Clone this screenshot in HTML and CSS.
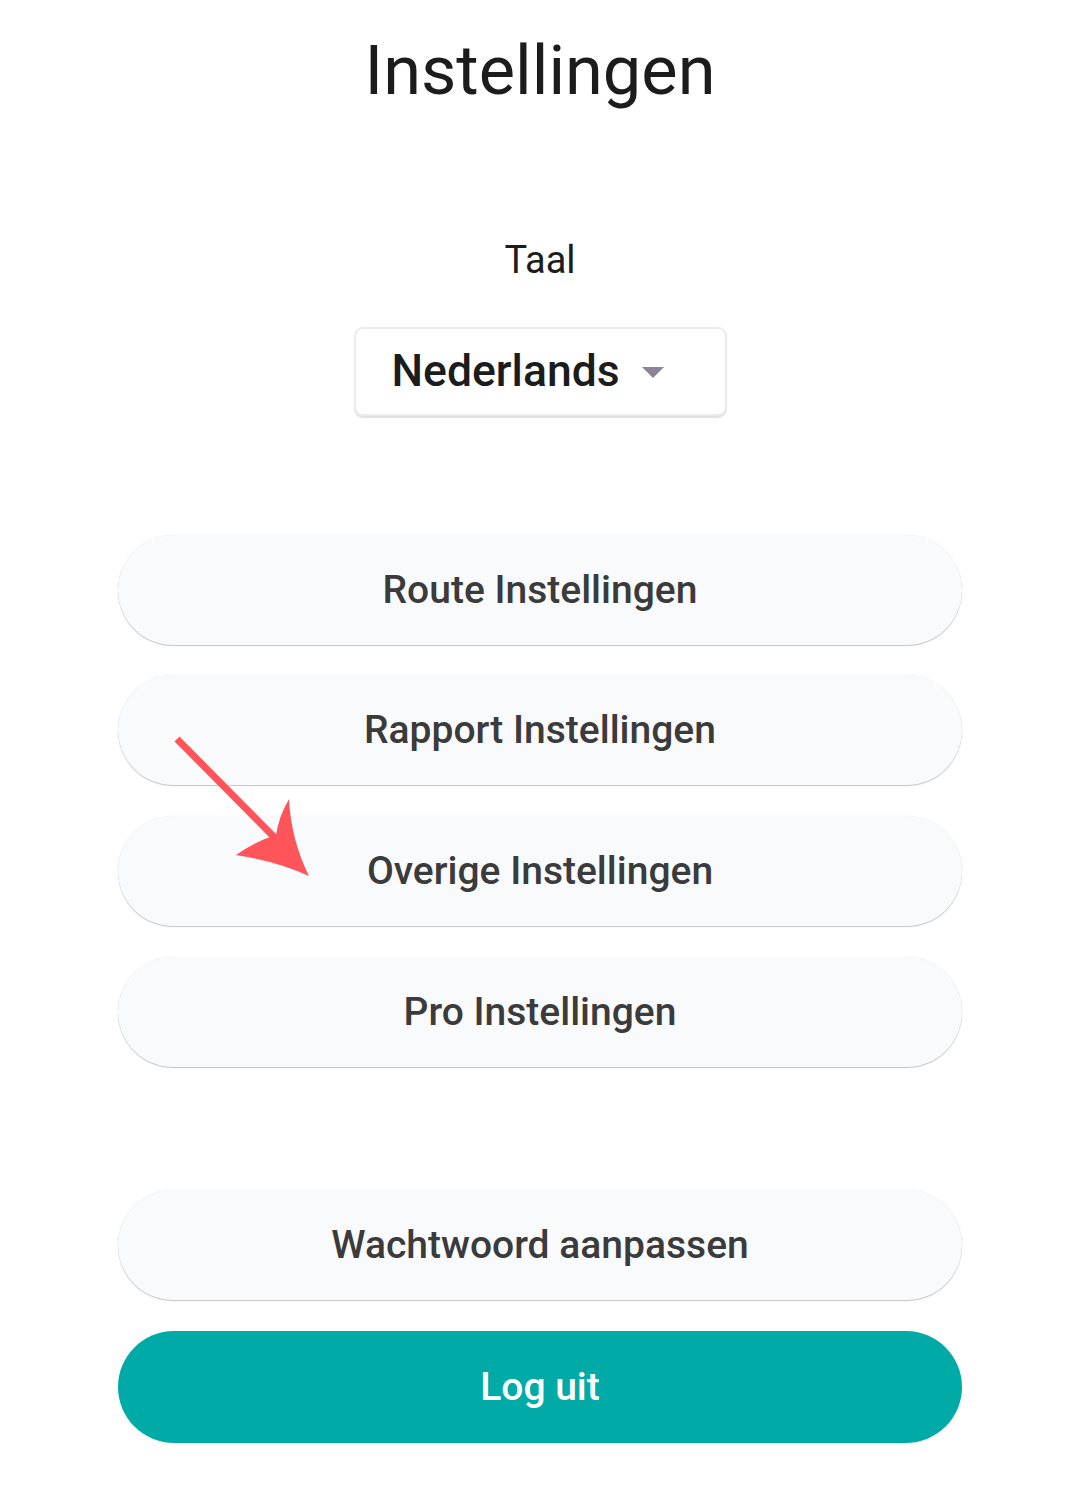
FILE: index.html
```html
<!DOCTYPE html>
<html lang="nl">
<head>
<meta charset="utf-8">
<title>Instellingen</title>
<link rel="stylesheet" href="styles.css">
</head>
<body>
<main class="page">
  <h1 class="title">Instellingen</h1>
  <div class="lang-label">Taal</div>
  <div class="select">
    <span class="select-value">Nederlands</span>
    <span class="select-caret"></span>
  </div>
  <div class="menu">
    <button class="btn">Route Instellingen</button>
    <button class="btn">Rapport Instellingen</button>
    <button class="btn">Overige Instellingen</button>
    <button class="btn">Pro Instellingen</button>
  </div>
  <div class="account">
    <button class="btn">Wachtwoord aanpassen</button>
    <button class="btn btn-primary">Log uit</button>
  </div>
  <svg class="pointer" width="160" height="160" viewBox="160 725 160 160" aria-hidden="true">
    <line x1="177" y1="739" x2="281" y2="844" stroke="#ff5459" stroke-width="7"/>
    <path d="M289 799 Q279 816 276 835 Q256 841 236 855 Q276 861 309 876 Q291 840 289 799 Z" fill="#ff5459"/>
  </svg>
</main>
</body>
</html>
```

FILE: styles.css
```css
html, body {
  margin: 0;
  padding: 0;
  background: #ffffff;
}

body {
  font-family: Roboto, "Liberation Sans", Arial, sans-serif;
  color: #1f1f1f;
}

.page {
  position: relative;
  width: 1080px;
  min-height: 1491px;
  display: flex;
  flex-direction: column;
  align-items: center;
}

.title {
  margin: 37px 0 0;
  font-size: 68.5px;
  line-height: 1;
  font-weight: 400;
  color: #1c1c1c;
}

.lang-label {
  margin-top: 135px;
  font-size: 38px;
  line-height: 1;
  color: #1c1c1c;
}

.select {
  margin-top: 48px;
  box-sizing: border-box;
  width: 373px;
  height: 89px;
  border: 2px solid #ececec;
  border-radius: 9px;
  box-shadow: 0 2px 1px rgba(0, 0, 0, 0.12);
  display: flex;
  align-items: center;
  padding-left: 36px;
  background: #fff;
}

.select-value {
  font-size: 44.5px;
  font-weight: 500;
  color: #1c1c1c;
  line-height: 1;
}

.select-caret {
  margin-left: 22px;
  margin-top: 2px;
  width: 0;
  height: 0;
  border-left: 11px solid transparent;
  border-right: 11px solid transparent;
  border-top: 11px solid #8b8497;
}

.menu {
  margin-top: 119px;
  display: flex;
  flex-direction: column;
  gap: 30.7px;
}

.account {
  margin-top: 123px;
  display: flex;
  flex-direction: column;
  gap: 31px;
}

.btn {
  width: 844px;
  height: 110px;
  border: none;
  border-radius: 55px;
  background: #f9fafc;
  box-shadow: 0 1px 1px rgba(0, 0, 0, 0.22), 0 0 1px rgba(0, 0, 0, 0.12);
  font-family: Roboto, "Liberation Sans", Arial, sans-serif;
  font-size: 39px;
  font-weight: 500;
  color: #3b3b3b;
  padding: 0;
  cursor: pointer;
}

.btn-primary {
  height: 112px;
  border-radius: 56px;
  background: #00aba7;
  color: #ffffff;
  box-shadow: none;
}

.pointer {
  position: absolute;
  left: 160px;
  top: 725px;
  pointer-events: none;
}
```
